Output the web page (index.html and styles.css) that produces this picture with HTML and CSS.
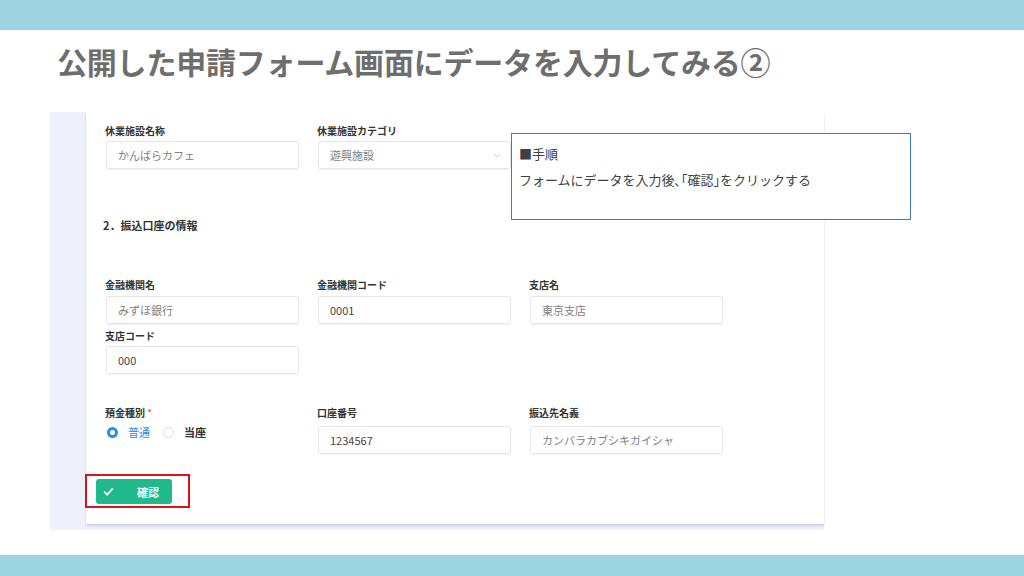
FILE: index.html
```html
<!DOCTYPE html>
<html lang="ja">
<head>
    <meta charset="UTF-8">
    <meta name="viewport" content="width=device-width, initial-scale=1.0">
    <title>申請フォーム入力</title>
    <link rel="stylesheet" href="styles.css">
</head>
<body>
    <div class="topbar"></div>

    <div class="heading">
        <h1>公開した申請フォーム画面にデータを入力してみる②</h1>
    </div>

    <div class="shot">
        <div class="side"></div>
        <div class="card">
            <div class="row">
                <div class="field">
                    <label>休業施設名称</label>
                    <div class="input light">かんばらカフェ</div>
                </div>
                <div class="field">
                    <label>休業施設カテゴリ</label>
                    <div class="input select light">遊興施設
                        <svg class="chev" width="8" height="5" viewBox="0 0 8 5"><path d="M1 1l3 3 3-3" fill="none" stroke="#c5c8ce" stroke-width="1"/></svg>
                    </div>
                </div>
            </div>

            <h3 class="section">2．振込口座の情報</h3>

            <div class="row row-bank">
                <div class="field">
                    <label>金融機関名</label>
                    <div class="input light">みずほ銀行</div>
                </div>
                <div class="field">
                    <label>金融機関コード</label>
                    <div class="input">0001</div>
                </div>
                <div class="field">
                    <label>支店名</label>
                    <div class="input light">東京支店</div>
                </div>
            </div>

            <div class="row row-branch">
                <div class="field">
                    <label>支店コード</label>
                    <div class="input">000</div>
                </div>
            </div>

            <div class="row row-account">
                <div class="field">
                    <label>預金種別 <span class="req">*</span></label>
                    <div class="radios">
                        <span class="radio checked"></span><span class="radio-text on">普通</span>
                        <span class="radio"></span><span class="radio-text">当座</span>
                    </div>
                </div>
                <div class="field">
                    <label>口座番号</label>
                    <div class="input">1234567</div>
                </div>
                <div class="field">
                    <label>振込先名義</label>
                    <div class="input light">カンバラカブシキガイシャ</div>
                </div>
            </div>

            <div class="mark">
                <button class="confirm">
                    <svg width="11" height="9" viewBox="0 0 11 9"><path d="M1.2 4.6l3 3 5.6-6.2" fill="none" stroke="#fff" stroke-width="1.8"/></svg>
                    <span>確認</span>
                </button>
            </div>
        </div>
    </div>

    <div class="note">
        <p>■手順</p>
        <p>フォームにデータを入力後､｢確認｣をクリックする</p>
    </div>

    <div class="bottombar"></div>
</body>
</html>
```

FILE: styles.css
```css
body {
    margin: 0;
    width: 1024px;
    height: 576px;
    background: #fff;
    font-family: "Noto Sans CJK JP", "Noto Sans", sans-serif;
    display: flex;
    flex-direction: column;
    position: relative;
    overflow: hidden;
}
.topbar {
    height: 30px;
    background-color: #9dd5e3;
}
.bottombar {
    height: 21px;
    margin-top: 25px;
    background-color: #9dd5e3;
}
.heading {
    height: 82px;
    padding-left: 57px;
    box-sizing: border-box;
    padding-top: 11px;
}
h1 {
    margin: 0;
    font-size: 30px;
    line-height: 40px;
    font-weight: 700;
    color: #6e6e6e;
    letter-spacing: -0.2px;
}

/* captured form */
.shot {
    margin-left: 50px;
    width: 774px;
    height: 418px;
    display: flex;
    background-color: #eef0fb;
}
.side {
    width: 36px;
}
.card {
    flex: 1;
    height: 412px;
    background-color: #fff;
    box-shadow: 0 2px 2px rgba(160, 170, 200, 0.45);
    padding: 12px 0 0 20px;
    box-sizing: border-box;
}
.row {
    display: grid;
    grid-template-columns: 193px 193px 193px;
    column-gap: 19px;
}
.field label {
    display: block;
    font-size: 10px;
    line-height: 14px;
    font-weight: 700;
    color: #333;
    margin: 0 0 3px -1px;
}
.req {
    color: #ed4014;
    font-weight: 400;
}
.input {
    height: 28px;
    border: 1px solid #e4e6ea;
    border-radius: 3px;
    box-shadow: 0 1px 2px rgba(0, 0, 0, 0.06);
    box-sizing: border-box;
    padding-left: 11px;
    font-size: 11px;
    line-height: 26px;
    color: #444;
    position: relative;
}
.input.light {
    color: #808080;
}
.select .chev {
    position: absolute;
    right: 9px;
    top: 11px;
}
.section {
    margin: 49px 0 0 -3px;
    font-size: 11px;
    line-height: 14px;
    font-weight: 700;
    color: #333;
}
.row-bank {
    margin-top: 46px;
}
.row-bank .field label {
    margin-bottom: 4px;
}
.row-branch {
    margin-top: 5px;
}
.row-account {
    margin-top: 32px;
}
.row-account .field label {
    margin-bottom: 6px;
}
.radios {
    display: flex;
    align-items: center;
    height: 16px;
    margin-top: -2px;
    padding-left: 1px;
}
.radio {
    width: 11px;
    height: 11px;
    border: 1px solid #dcdee2;
    border-radius: 50%;
    box-sizing: border-box;
    position: relative;
}
.radio.checked {
    border: 3px solid #2d8cf0;
    background: #fff;
}
.radio-text {
    font-size: 11px;
    font-weight: 700;
    color: #333;
    margin: 0 13px 0 10px;
}
.radio-text.on {
    color: #2d8cf0;
    font-weight: 400;
}
.mark {
    margin: 20px 0 0 -21px;
    width: 105px;
    height: 34px;
    border: 2px solid #d9141b;
    box-sizing: border-box;
    padding: 3px 0 0 9px;
}
.confirm {
    width: 76px;
    height: 25px;
    border: none;
    border-radius: 3px;
    background-color: #1fb98c;
    display: flex;
    align-items: center;
    padding: 0 0 0 7px;
    color: #fff;
    font-family: inherit;
    font-size: 11px;
    font-weight: 700;
}
.confirm span {
    margin-left: 23px;
}

/* step note */
.note {
    position: absolute;
    left: 511px;
    top: 133px;
    width: 400px;
    height: 87px;
    border: 1px solid #3b7fb4;
    box-sizing: border-box;
    background: #fff;
    padding: 7px 0 0 7px;
}
.note p {
    margin: 0;
    font-size: 13px;
    line-height: 26px;
    color: #404040;
}
```
